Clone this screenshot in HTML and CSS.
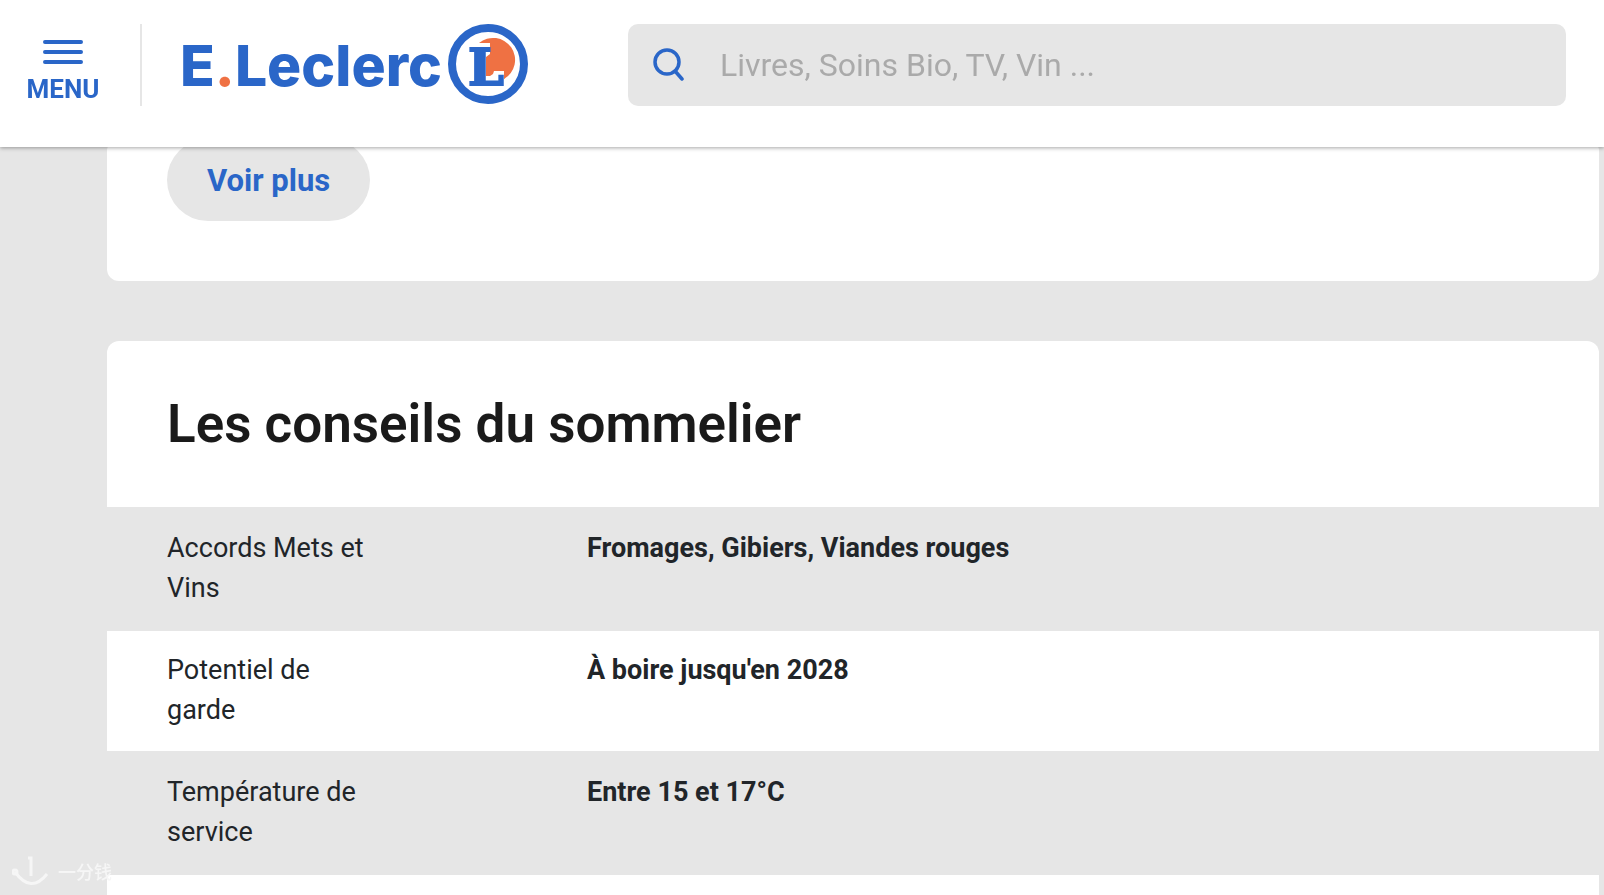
FILE: index.html
```html
<!DOCTYPE html>
<html lang="fr">
<head>
    <meta charset="UTF-8">
    <meta name="viewport" content="width=device-width, initial-scale=1.0">
    <title>E.Leclerc</title>
    <link rel="stylesheet" href="styles.css">
</head>
<body>

    <header class="header">
        <button type="button" class="menu-button">
            <svg class="menu-icon" viewBox="0 0 40 24" aria-hidden="true">
                <path d="M2 2H38M2 12H38M2 22H38"/>
            </svg>
            <span>MENU</span>
        </button>

        <a href="#" class="logo">
            <span class="logo-name">E<span class="logo-dot">.</span>Leclerc</span>
            <svg class="logo-badge" viewBox="0 0 80 80" aria-hidden="true">
                <circle class="badge-ring" cx="40" cy="40" r="36"/>
                <path class="badge-sun" d="M31 19A22 22 0 1 1 56 55V47H46L45 50L42 52H38V33L42 30V19Z"/>
                <text class="badge-letter" x="20" y="61">L</text>
            </svg>
        </a>

        <form class="search" role="search">
            <label for="search">
                <svg class="search-icon" viewBox="0 0 32 34" aria-hidden="true">
                    <circle cx="15" cy="14" r="12"/>
                    <path d="M23 23L30 31"/>
                </svg>
            </label>
            <input type="search" id="search" class="search-input" aria-label="Rechercher" placeholder="Livres, Soins Bio, TV, Vin ...">
        </form>
    </header>

    <main class="content">
        <section class="card card-more">
            <button type="button" class="more-button">Voir plus</button>
        </section>

        <section class="card">
            <h2 class="card-title">Les conseils du sommelier</h2>
            <table class="specs">
                <tr>
                    <th scope="row">Accords Mets et Vins</th>
                    <td>Fromages, Gibiers, Viandes rouges</td>
                </tr>
                <tr>
                    <th scope="row">Potentiel de garde</th>
                    <td>À boire jusqu'en 2028</td>
                </tr>
                <tr>
                    <th scope="row">Température de service</th>
                    <td>Entre 15 et 17°C</td>
                </tr>
                <tr>
                    <th scope="row"></th>
                    <td></td>
                </tr>
            </table>
        </section>
    </main>

    <div class="watermark">
        <svg class="watermark-icon" viewBox="0 0 38 30" aria-hidden="true">
            <path d="M16 2H19V20M3 16Q19 38 35 18"/>
            <circle cx="3" cy="16" r="2"/>
        </svg>
        <span>一分钱</span>
    </div>

</body>
</html>
```

FILE: styles.css
```css
* {
    box-sizing: border-box;
}
body {
    margin: 0;
    background-color: #e6e6e6;
    color: #212529;
    font-family: Roboto, "Liberation Sans", sans-serif;
    font-size: 27px;
    line-height: 40px;
}
button {
    border: 0;
    font-family: inherit;
    font-weight: 700;
    color: #2a66c8;
    cursor: pointer;
}
/* Header */
.header {
    position: fixed;
    top: 0;
    left: 0;
    right: 0;
    z-index: 2;
    display: flex;
    align-items: flex-start;
    height: 147px;
    padding: 24px 38px 0 0;
    background-color: white;
    box-shadow: 0 1px 4px rgba(0, 0, 0, 0.35);
}
.menu-button {
    display: flex;
    flex-direction: column;
    align-items: center;
    gap: 10px;
    width: 142px;
    height: 82px;
    padding: 16px 14px 0 0;
    border-right: 2px solid #e6e6e6;
    background: none;
    font-size: 26px;
    line-height: 30px;
}
.menu-icon {
    width: 40px;
    height: 24px;
    flex: none;
    fill: none;
    stroke: #2a66c8;
    stroke-width: 4;
    stroke-linecap: round;
}
.logo {
    display: flex;
    align-items: center;
    justify-content: space-between;
    flex: none;
    width: 386px;
    height: 80px;
    margin-right: 100px;
    padding-left: 38px;
    color: #2a66c8;
    text-decoration: none;
}
.logo-name {
    padding-top: 4px;
    font-family: Inter, Roboto, sans-serif;
    font-size: 57px;
    font-weight: 800;
    line-height: 80px;
}
.logo-dot {
    color: #ef7143;
}
.logo-badge {
    width: 80px;
    height: 80px;
    flex: none;
}
.badge-ring {
    fill: white;
    stroke: #2a66c8;
    stroke-width: 8;
}
.badge-sun {
    fill: #ef7143;
}
.badge-letter {
    fill: #2a66c8;
    stroke: #2a66c8;
    stroke-width: 2;
    font-family: "DejaVu Serif", serif;
    font-size: 51px;
    font-weight: 700;
}
.search {
    display: flex;
    align-items: center;
    flex: 1;
    height: 82px;
    padding: 0 24px;
    border-radius: 10px;
    background-color: #e6e6e6;
}
.search-icon {
    display: block;
    width: 32px;
    height: 34px;
    fill: none;
    stroke: #2a66c8;
    stroke-width: 3.5;
    stroke-linecap: round;
}
.search-input {
    flex: 1;
    min-width: 0;
    height: 82px;
    padding: 0 0 0 36px;
    border: 0;
    outline: 0;
    background: none;
    font-family: inherit;
    font-size: 32px;
}
.search-input::placeholder {
    color: #aaa;
}
/* Content */
.content {
    display: flex;
    flex-direction: column;
    gap: 60px;
    padding: 139px 5px 60px 107px;
}
.card {
    overflow: hidden;
    border-radius: 12px;
    background-color: white;
}
.card-more {
    padding: 0 60px 60px;
}
.more-button {
    display: block;
    height: 82px;
    padding: 0 40px;
    border-radius: 41px;
    background-color: #e6e6e6;
    font-size: 31px;
}
.card-title {
    margin: 0;
    padding: 48px 60px;
    color: #1a1a1a;
    font-size: 53px;
    font-weight: 600;
    line-height: 70px;
}
.specs {
    width: 100%;
    border-collapse: separate;
    border-spacing: 0;
}
.specs th,
.specs td {
    height: 122px;
    padding: 19px 60px 21px 0;
    border-top: 2px solid #e6e6e6;
    text-align: left;
    vertical-align: top;
}
.specs th {
    width: 480px;
    padding-left: 60px;
    padding-right: 210px;
    font-weight: 400;
}
.specs td {
    font-weight: 700;
}
.specs tr:nth-child(odd) {
    background-color: #e6e6e6;
}
/* Watermark */
.watermark {
    position: fixed;
    left: 12px;
    bottom: 9px;
    z-index: 3;
    display: flex;
    align-items: center;
    gap: 8px;
    color: #f6f6f6;
    font-family: "Noto Sans CJK SC", sans-serif;
    font-size: 18px;
    font-weight: 500;
    line-height: 30px;
}
.watermark-icon {
    width: 38px;
    height: 30px;
    fill: none;
    stroke: #f6f6f6;
    stroke-width: 3;
}
```
